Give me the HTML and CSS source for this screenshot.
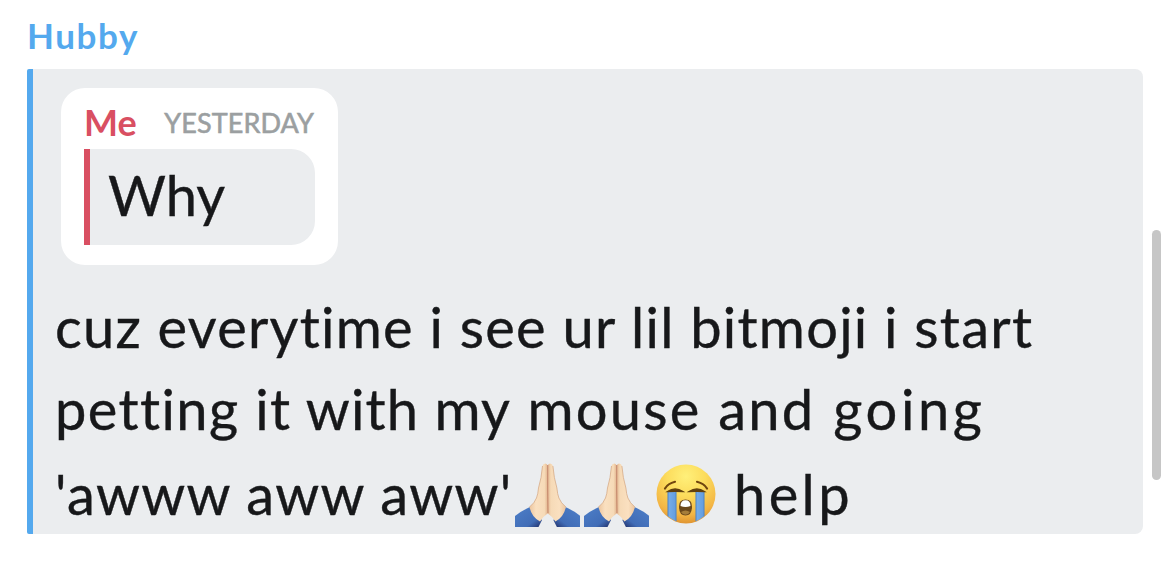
FILE: index.html
```html
<!DOCTYPE html>
<html lang="en">
<head>
    <meta charset="UTF-8">
    <meta name="viewport" content="width=device-width, initial-scale=1.0">
    <title>Chat</title>
    <link rel="stylesheet" href="styles.css">
</head>
<body>

    <!-- shared emoji artwork -->
    <svg class="defs" width="0" height="0">
        <defs>
            <linearGradient id="skin" x1="0" y1="0" x2="1" y2="0">
                <stop offset="0" stop-color="#ecc59e"/>
                <stop offset=".35" stop-color="#fae0c0"/>
                <stop offset=".8" stop-color="#f6dab7"/>
                <stop offset="1" stop-color="#dfaf88"/>
            </linearGradient>
            <linearGradient id="sleeve" x1="0" y1="0" x2="1" y2="1">
                <stop offset="0" stop-color="#4d7fc8"/>
                <stop offset=".7" stop-color="#416db7"/>
                <stop offset="1" stop-color="#202d66"/>
            </linearGradient>
            <radialGradient id="face" cx=".5" cy=".2" r=".82">
                <stop offset="0" stop-color="#fff07a"/>
                <stop offset=".4" stop-color="#fcdc5c"/>
                <stop offset=".8" stop-color="#f3b544"/>
                <stop offset="1" stop-color="#dd902f"/>
            </radialGradient>
            <linearGradient id="tear" x1="0" y1="0" x2="1" y2="0">
                <stop offset="0" stop-color="#477fc4"/>
                <stop offset=".2" stop-color="#74abe8"/>
                <stop offset=".8" stop-color="#669fe0"/>
                <stop offset="1" stop-color="#477fc4"/>
            </linearGradient>
            <g id="hand">
                <path fill="url(#sleeve)" d="M0 53Q6 48 15 44L27 57L23.5 64H0Z"/>
                <path fill="url(#skin)" d="M27.5 3Q28 .5 30.3 .5Q32.5 .5 32.6 3L33.2 50Q28 53.5 25 58.5Q16.5 54 14.5 44Q19.5 40 21.5 35Q23 31 23.5 25Q26.5 15 27.5 3Z"/>
                <path fill="none" stroke="#d3a37d" stroke-width=".7" d="M27.5 3Q26.5 15 23.5 25Q23 31 21.5 35Q19.5 40 14.5 44"/>
            </g>
            <symbol id="pray" viewBox="0 0 65 64">
                <use href="#hand"/>
                <use href="#hand" transform="translate(65.4 0) scale(-1 1)"/>
                <path fill="none" stroke="#c4866b" stroke-width="1" d="M32.7 2V25L33 50"/>
            </symbol>
            <symbol id="cry" viewBox="0 0 60 60">
                <circle cx="30" cy="30" r="29.5" fill="url(#face)"/>
                <path fill="url(#tear)" d="M11.5 27H20.5V57.5Q15 55 11.5 52Z"/>
                <path fill="url(#tear)" d="M48.5 27H39.5V57.5Q45 55 48.5 52Z"/>
                <path class="brow" d="M9 24.5Q12 19.5 19 17.8M51 24.5Q48 19.5 41 17.8"/>
                <path class="lid" d="M11.5 27.5Q19 22.5 27 27.5Q19 27.2 11.5 27.5ZM48.5 27.5Q41 22.5 33 27.5Q41 27.2 48.5 27.5Z"/>
                <path fill="#6b481b" d="M29.5 35.5Q36 35.5 36 42.5Q36 51.5 29.5 51.5Q23 51.5 23 42.5Q23 35.5 29.5 35.5Z"/>
                <path fill="#fff" d="M24.5 42Q24.5 36.3 29.5 36.3Q34.5 36.3 34.5 42Q32 43 29.5 43Q27 43 24.5 42Z"/>
                <path fill="#a67d3a" d="M25 48Q29.5 45 34 48Q32.5 50.8 29.5 50.8Q26.5 50.8 25 48Z"/>
            </symbol>
        </defs>
    </svg>

    <main class="chat">
        <div class="sender">Hubby</div>
        <div class="row">
            <div class="message">
                <div class="reply">
                    <div class="replyHeader">
                        <span class="replyName">Me</span>
                        <span class="replyDate">YESTERDAY</span>
                    </div>
                    <div class="replyText"><span>Why</span></div>
                </div>
                <div class="text">
                    <div class="line first">cuz everytime i see ur lil bitmoji i start</div>
                    <div class="line second">petting it<span class="tight"> with my</span><span class="loose"> mouse and</span><span class="looser"> going</span></div>
                    <div class="line third"><span class="awww">'awww aww aww'</span><svg class="pray"><use href="#pray"/></svg><svg class="pray"><use href="#pray"/></svg><svg class="cry"><use href="#cry"/></svg><span class="help">help</span></div>
                </div>
            </div>
            <div class="scrollbar"></div>
        </div>
    </main>

</body>
</html>
```
FILE: styles.css
```css
* {
    box-sizing: border-box;
}

body {
    margin: 0;
    height: 566px;
    overflow: hidden;
    background-color: white;
    font-family: "Lato", "Open Sans", sans-serif;
    color: #17181a;
}

.defs {
    display: block;
}

.chat {
    padding: 13px 9px 0 27px;
}

.sender {
    height: 56px;
    font-size: 35px;
    line-height: 44px;
    font-weight: 700;
    letter-spacing: 1.6px;
    color: #54a9ee;
}

.row {
    display: flex;
    gap: 9px;
}

.message {
    width: 1116px;
    height: 465px;
    padding: 19px 0 0 28px;
    border-left: 6px solid #54a9ee;
    border-radius: 2px 8px 8px 2px;
    background-color: #ebedef;
}

.reply {
    width: 277px;
    height: 177px;
    padding: 13px 23px 0;
    border-radius: 24px;
    background-color: white;
}

.replyHeader {
    display: flex;
    justify-content: space-between;
    height: 48px;
    white-space: nowrap;
}

.replyName {
    font-size: 36px;
    line-height: 42px;
    font-weight: 700;
    color: #d94f62;
}

.replyDate {
    margin-right: 1px;
    font-size: 27px;
    line-height: 43px;
    letter-spacing: 0.1px;
    color: #9b9fa1;
    -webkit-text-stroke: 0.6px #9b9fa1;
}

.replyText {
    height: 96px;
    padding-left: 18px;
    border-left: 6px solid #d94f62;
    border-radius: 0 24px 24px 0;
    background-color: #ebedef;
    font-size: 56px;
    line-height: 91px;
    -webkit-text-stroke: 0.4px #17181a;
}

.text {
    margin: 21px 0 0 -6px;
    font-size: 56px;
    line-height: 82px;
    white-space: nowrap;
    -webkit-text-stroke: 0.4px #17181a;
}

.first {
    letter-spacing: 1.25px;
}

.second {
    letter-spacing: 1.4px;
}

.tight {
    letter-spacing: 1.1px;
}

.loose {
    letter-spacing: 2.25px;
}

.looser {
    letter-spacing: 3.6px;
}

.third {
    padding-top: 3px;
}

.awww {
    display: inline-block;
    width: 460px;
    letter-spacing: 1.3px;
}

.pray {
    width: 65px;
    height: 64px;
    margin-right: 4px;
    vertical-align: -12px;
}

.cry {
    width: 60px;
    height: 60px;
    margin-left: 3px;
    vertical-align: -9px;
}

.brow {
    fill: none;
    stroke: #70460f;
    stroke-width: 2.2;
    stroke-linecap: round;
}

.lid {
    fill: #60410f;
    stroke: #60410f;
    stroke-width: 1.3;
}

.help {
    margin-left: 18px;
    letter-spacing: 3.4px;
}

.scrollbar {
    width: 9px;
    height: 250px;
    margin-top: 161px;
    border-radius: 5px;
    background-color: #c6c6c6;
}
```
